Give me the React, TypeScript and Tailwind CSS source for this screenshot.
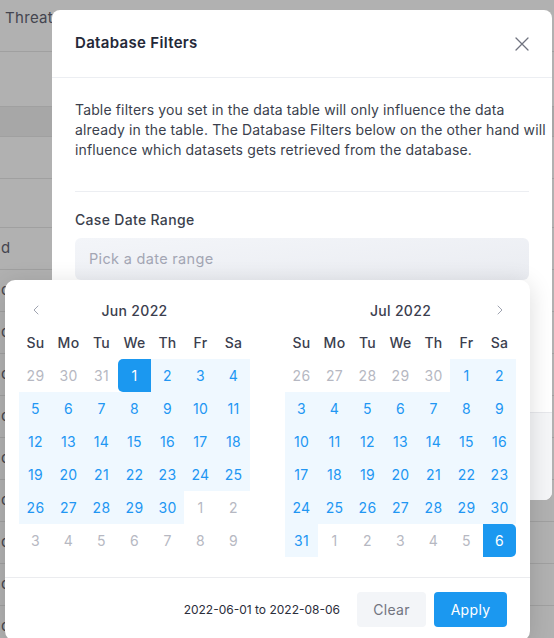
import { ChevronLeft, ChevronRight } from 'lucide-react';

type Day = { n: number; kind: 'muted' | 'range' | 'start' | 'end' };

const weekDays = ['Su', 'Mo', 'Tu', 'We', 'Th', 'Fr', 'Sa'];

const junDays: Day[] = [
    ...[29, 30, 31].map((n) => ({ n, kind: 'muted' as const })),
    { n: 1, kind: 'start' },
    ...Array.from({ length: 29 }, (_, i) => ({ n: i + 2, kind: 'range' as const })),
    ...Array.from({ length: 9 }, (_, i) => ({ n: i + 1, kind: 'muted' as const })),
];

const julDays: Day[] = [
    ...[26, 27, 28, 29, 30].map((n) => ({ n, kind: 'muted' as const })),
    ...Array.from({ length: 31 }, (_, i) => ({ n: i + 1, kind: 'range' as const })),
    ...[1, 2, 3, 4, 5].map((n) => ({ n, kind: 'muted' as const })),
    { n: 6, kind: 'end' },
];

const bgRows = [
    { h: 'h-[52px]', text: 'Threat', band: false },
    { h: 'h-[55px]', text: '', band: false },
    { h: 'h-[30px]', text: '', band: true },
    { h: 'h-[42px]', text: '', band: false },
    { h: 'h-[49px]', text: '', band: false },
    { h: 'h-[42px]', text: 'd', band: false },
    ...Array.from({ length: 9 }, () => ({ h: 'h-[42px]', text: 'c', band: false })),
];

function dayClass(kind: Day['kind']) {
    switch (kind) {
        case 'start':
            return 'bg-[#1b98f0] text-white rounded-l-[5px]';
        case 'end':
            return 'bg-[#1b98f0] text-white rounded-r-[5px]';
        case 'range':
            return 'bg-[#eff8ff] text-[#2196f3]';
        default:
            return 'text-[#b6b8c2]';
    }
}

function Month({ title, days, prev, next }: { title: string; days: Day[]; prev?: boolean; next?: boolean }) {
    return (
        <div className="w-[231px]">
            <div className="h-[32px] flex items-center justify-between">
                <div className="w-[33px] flex justify-center text-[#9094a4]">
                    {prev && <ChevronLeft className="w-4 h-4" strokeWidth={1.3} />}
                </div>
                <span className="text-[14px] font-medium text-[#3b3e4e]">{title}</span>
                <div className="w-[33px] flex justify-center text-[#9094a4]">
                    {next && <ChevronRight className="w-4 h-4" strokeWidth={1.3} />}
                </div>
            </div>
            <div className="grid grid-cols-7">
                {weekDays.map((d) => (
                    <div key={d} className="h-[33px] flex items-center justify-center text-[14px] font-medium text-[#3b3e4e]">
                        {d}
                    </div>
                ))}
                {days.map((d, i) => (
                    <div key={i} className={`h-[33px] flex items-center justify-center text-[14px] ${dayClass(d.kind)}`}>
                        {d.n}
                    </div>
                ))}
            </div>
        </div>
    );
}

export default function App() {
    return (
        <div className="relative w-[554px] h-[638px] overflow-hidden bg-[#b1b1b1] font-['Inter',sans-serif] tracking-[0.02em]">
            {/* page behind the overlay */}
            <div className="flex flex-col">
                {bgRows.map((r, i) => (
                    <div
                        key={i}
                        className={`${r.h} shrink-0 flex border-b border-[#a0a0a0] ${r.band ? 'bg-[#a7a7a7]' : ''} ${r.text === 'Threat' ? 'items-start pt-[7px]' : 'items-center'}`}
                    >
                        {r.text && (
                            <span className={`text-[15px] text-[#44454f] ${r.text === 'Threat' ? 'pl-[5px]' : 'pl-[1px]'}`}>
                                {r.text}
                            </span>
                        )}
                    </div>
                ))}
            </div>

            {/* modal */}
            <div className="absolute left-[52px] top-[10px] w-[500px] h-[490px] bg-white rounded-[8px] flex flex-col overflow-hidden">
                <div className="h-[68px] shrink-0 px-[23px] flex items-center justify-between border-b border-[#eceef2]">
                    <h2 className="text-[15px] font-semibold text-[#242838]">Database Filters</h2>
                    <svg width="14" height="14" viewBox="0 0 14 14" className="text-[#70737f]">
                        <path d="M1 1L13 13M13 1L1 13" stroke="currentColor" strokeWidth="1.3" strokeLinecap="round" />
                    </svg>
                </div>
                <div className="flex-1 px-[23px] pt-[22px]">
                    <p className="text-[14px] leading-[20px] text-[#3b3f4d] tracking-[0.01em] whitespace-nowrap pb-[31px] border-b border-[#eceef2]">
                        Table filters you set in the data table will only influence the data
                        <br />
                        already in the table. The Database Filters below on the other hand will
                        <br />
                        influence which datasets gets retrieved from the database.
                    </p>
                    <p className="mt-[17px] text-[14px] font-medium text-[#3b3f4d]">Case Date Range</p>
                    <div className="mt-[8px] h-[42px] rounded-[6px] bg-gradient-to-br from-[#f3f5f9] to-[#eaecf1] flex items-center px-[14px] text-[14.5px] text-[#a3a6b4]">
                        Pick a date range
                    </div>
                </div>
                <div className="h-[88px] shrink-0 border-t border-[#e7e8ec] bg-[#f5f6f8]" />
            </div>

            {/* date range popup */}
            <div className="absolute left-[5px] top-[280px] w-[525px] bg-white rounded-[10px] shadow-[0_4px_24px_rgba(0,0,0,0.14)]">
                <div className="px-[14px] pt-[14px] pb-[20px] flex gap-[35px]">
                    <Month title="Jun 2022" days={junDays} prev />
                    <Month title="Jul 2022" days={julDays} next />
                </div>
                <div className="border-t border-[#ebecef] pt-[14px] pb-[14px] pr-[23px] flex items-center justify-end gap-[8px]">
                    <span className="text-[12px] tracking-normal text-[#2b2e3b] mr-[9px]">2022-06-01 to 2022-08-06</span>
                    <button className="w-[69px] h-[35px] rounded-[4px] bg-[#f3f5f8] text-[14px] text-[#71747f]">Clear</button>
                    <button className="w-[73px] h-[35px] rounded-[4px] bg-[#1b98f0] text-[14px] text-white">Apply</button>
                </div>
            </div>
        </div>
    );
}
